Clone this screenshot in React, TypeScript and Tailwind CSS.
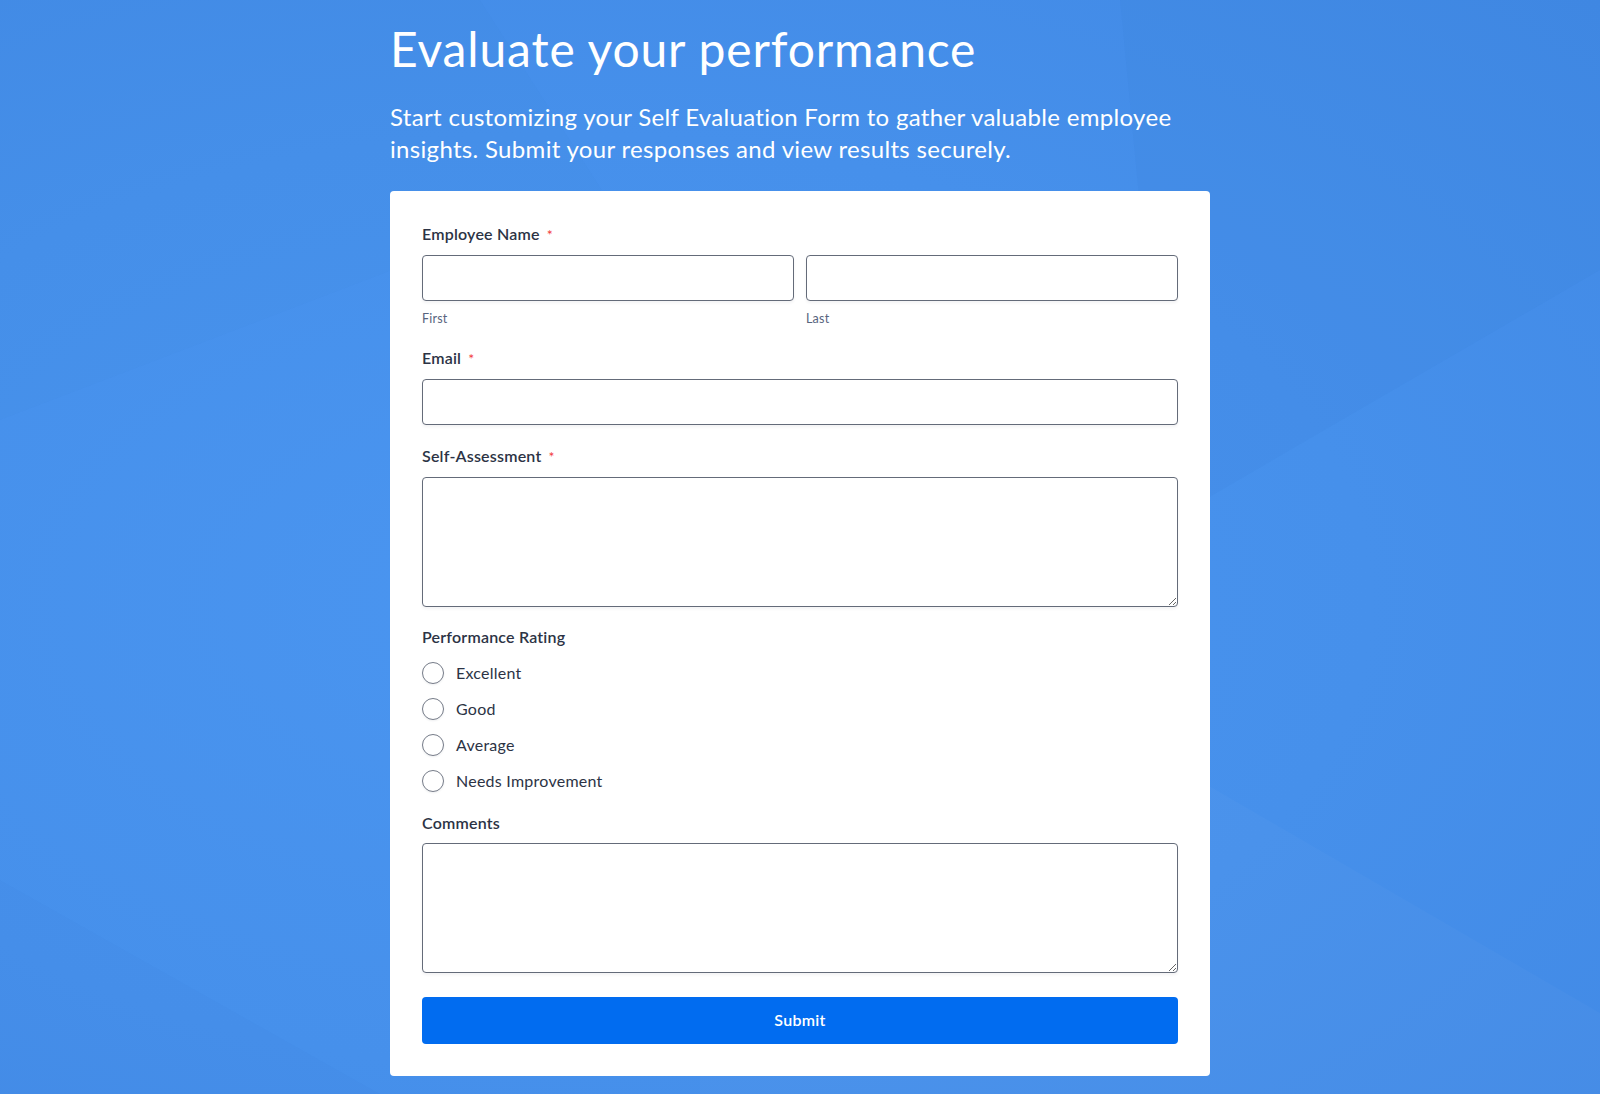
import React from "react";

const font = { fontFamily: "Lato, 'Noto Sans', sans-serif" };

function Label({ text, required }: { text: string; required?: boolean }) {
  return (
    <div className="flex items-baseline text-[16px] leading-[20px] font-semibold tracking-[0.2px] text-[#2c3345]">
      <span>{text}</span>
      {required && <span className="ml-[7px] text-[14px] font-normal text-[#f23a3c]">*</span>}
    </div>
  );
}

const inputCls =
  "block w-full h-[46px] rounded-[4px] border border-[#646b79] bg-white px-3 text-[16px] text-[#2c3345] outline-none shadow-[0_2px_3px_rgba(43,51,69,0.06)]";
const areaCls =
  "block w-full rounded-[4px] border border-[#646b79] bg-white px-3 py-2 text-[16px] text-[#2c3345] outline-none shadow-[0_2px_3px_rgba(43,51,69,0.06)]";

function Radio({ text }: { text: string }) {
  return (
    <label className="flex h-6 items-center">
      <span className="block h-[22px] w-[22px] rounded-full border border-[#767c89] bg-white shadow-[0_1px_2px_rgba(43,51,69,0.08)]" />
      <span className="ml-3 text-[16px] leading-6 tracking-[0.25px] text-[#2c3345]">{text}</span>
    </label>
  );
}

export default function App() {
  return (
    <div
      style={font}
      className="relative min-h-screen overflow-hidden bg-[radial-gradient(ellipse_at_35%_55%,#4a95f0_0%,#4690eb_55%,#4189e5_100%)] pb-[18px]"
    >
      <svg
        className="pointer-events-none absolute inset-0 h-full w-full"
        viewBox="0 0 1600 1094"
        preserveAspectRatio="none"
      >
        <polygon points="700,490 1600,1013 1600,1094 700,1094" fill="#ffffff" opacity="0.025" />
        <polygon points="1120,0 1600,0 1600,270 1170,520" fill="#1d4fa8" opacity="0.035" />
        <polygon points="0,0 480,0 602,190 0,420" fill="#1d4fa8" opacity="0.02" />
        <polygon points="0,880 380,1094 0,1094" fill="#1d4fa8" opacity="0.025" />
      </svg>

      <div className="relative mx-auto w-[820px]">
        <h1 className="pt-[20px] text-[48px] leading-[1.2] font-normal tracking-[0.85px] text-white">
          Evaluate your performance
        </h1>
        <p className="mt-[23px] text-[24px] leading-[32px] tracking-[0.32px] text-white">
          Start customizing your Self Evaluation Form to gather valuable employee insights. Submit your responses and view results securely.
        </p>

        <form className="mt-[26px] rounded-[4px] bg-white px-8 pt-[33px] pb-8" onSubmit={(e) => e.preventDefault()}>
          <Label text="Employee Name" required />
          <div className="mt-[10px] grid grid-cols-2 gap-3">
            <div>
              <input className={inputCls} />
              <div className="mt-[10px] text-[12.5px] leading-4 tracking-[0.2px] text-[#57647e]">First</div>
            </div>
            <div>
              <input className={inputCls} />
              <div className="mt-[10px] text-[12.5px] leading-4 tracking-[0.2px] text-[#57647e]">Last</div>
            </div>
          </div>

          <div className="mt-[21px]">
            <Label text="Email" required />
            <input className={`${inputCls} mt-[10px]`} />
          </div>

          <div className="mt-[21px]">
            <Label text="Self-Assessment" required />
            <textarea className={`${areaCls} mt-[10px] h-[130px]`} />
          </div>

          <div className="mt-[20px]">
            <Label text="Performance Rating" />
            <div className="mt-[14px] flex flex-col gap-3">
              <Radio text="Excellent" />
              <Radio text="Good" />
              <Radio text="Average" />
              <Radio text="Needs Improvement" />
            </div>
          </div>

          <div className="mt-[20px]">
            <Label text="Comments" />
            <textarea className={`${areaCls} mt-[10px] h-[130px]`} />
          </div>

          <button
            type="submit"
            className="mt-[24px] block h-[47px] w-full rounded-[4px] bg-[#016cf0] text-[16px] font-semibold tracking-[0.3px] text-white"
          >
            Submit
          </button>
        </form>
      </div>
    </div>
  );
}
